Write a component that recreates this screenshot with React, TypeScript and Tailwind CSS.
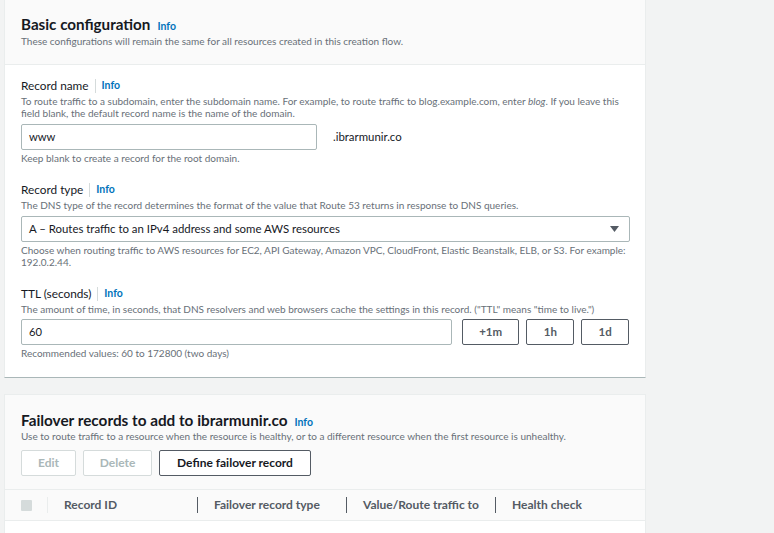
import React from "react";

const font = { fontFamily: "Lato, 'Noto Sans', sans-serif" };

function Info() {
  return <span className="text-[10.5px] font-bold text-[#0073bb]">Info</span>;
}

function FieldLabel({ children }: { children: React.ReactNode }) {
  return (
    <div className="flex h-[16px] items-center text-[11.8px] text-[#16191f]">
      <span>{children}</span>
      <span className="mx-[6px] h-[14px] w-px bg-[#d5dbdb]" />
      <Info />
    </div>
  );
}

function Hint({ children, className = "" }: { children: React.ReactNode; className?: string }) {
  return <p className={`text-[10px] leading-[12px] text-[#687078] ${className}`}>{children}</p>;
}

function TimeButton({ label, width }: { label: string; width: string }) {
  return (
    <button className={`h-[26px] ${width} rounded-[2px] border border-[#545b64] bg-white text-[11.5px] font-bold text-[#545b64]`}>
      {label}
    </button>
  );
}

export default function App() {
  return (
    <div style={font} className="h-[533px] w-[774px] overflow-hidden bg-[#f2f3f3] pl-[4px]">
      <section className="w-[642px] border-x border-b border-[#eaeded] border-b-[#aab7b8] bg-white">
        <div className="h-[65px] border-b border-[#eaeded] bg-[#fafafa] px-[16px] pt-[13px]">
          <div className="flex h-[20px] items-baseline gap-[7px] pt-[1px]">
            <h2 className="text-[15.2px] font-bold leading-[20px] text-[#16191f]">Basic configuration</h2>
            <Info />
          </div>
          <Hint className="mt-[2px]">
            These configurations will remain the same for all resources created in this creation flow.
          </Hint>
        </div>

        <div className="px-[16px] pb-[18px] pt-[13px]">
          <FieldLabel>Record name</FieldLabel>
          <Hint className="mt-[1px]">
            To route traffic to a subdomain, enter the subdomain name. For example, to route traffic to blog.example.com, enter <i>blog</i>. If you leave this field blank, the default record name is the name of the domain.
          </Hint>
          <div className="mt-[5px] flex items-center">
            <div className="flex h-[26px] w-[296px] items-center rounded-[2px] border border-[#aab7b8] px-[7px] text-[11.2px] text-[#16191f]">
              www
            </div>
            <span className="ml-[16px] text-[11.4px] text-[#16191f]">.ibrarmunir.co</span>
          </div>
          <Hint className="mt-[2px]">Keep blank to create a record for the root domain.</Hint>

          <div className="mt-[18px]">
            <FieldLabel>Record type</FieldLabel>
          </div>
          <Hint className="mt-[1px]">
            The DNS type of the record determines the format of the value that Route 53 returns in response to DNS queries.
          </Hint>
          <div className="mt-[5px] flex h-[26px] w-[609px] items-center justify-between rounded-[2px] border border-[#aab7b8] pl-[7px] pr-[10px] text-[11.4px] text-[#16191f]">
            <span>A – Routes traffic to an IPv4 address and some AWS resources</span>
            <svg width="9" height="6" viewBox="0 0 9 6">
              <path d="M0 0h9L4.5 6z" fill="#545b64" />
            </svg>
          </div>
          <Hint className="mt-[2px]">
            Choose when routing traffic to AWS resources for EC2, API Gateway, Amazon VPC, CloudFront, Elastic Beanstalk, ELB, or S3. For example: 192.0.2.44.
          </Hint>

          <div className="mt-[18px]">
            <FieldLabel>TTL (seconds)</FieldLabel>
          </div>
          <Hint className="mt-[1px]">
            The amount of time, in seconds, that DNS resolvers and web browsers cache the settings in this record. ("TTL" means "time to live.")
          </Hint>
          <div className="mt-[4px] flex items-center gap-[7px]">
            <div className="mr-[3px] flex h-[26px] w-[433px] items-center rounded-[2px] border border-[#aab7b8] px-[7px] text-[11.2px] text-[#16191f]">
              60
            </div>
            <TimeButton label="+1m" width="w-[58px]" />
            <TimeButton label="1h" width="w-[48px]" />
            <TimeButton label="1d" width="w-[48px]" />
          </div>
          <Hint className="mt-[2px]">Recommended values: 60 to 172800 (two days)</Hint>
        </div>
      </section>

      <section className="mt-[16px] w-[642px] border-x border-t border-[#eaeded] bg-[#fafafa]">
        <div className="px-[16px] pt-[14px]">
          <div className="flex h-[20px] items-baseline gap-[7px] pt-[1px]">
            <h2 className="text-[15.3px] font-bold leading-[20px] text-[#16191f]">Failover records to add to ibrarmunir.co</h2>
            <Info />
          </div>
          <Hint className="mt-[1px]">
            Use to route traffic to a resource when the resource is healthy, or to a different resource when the first resource is unhealthy.
          </Hint>
          <div className="mt-[8px] flex gap-[7px] pb-[13px]">
            <button className="h-[26px] w-[55px] rounded-[2px] border border-[#d5dbdb] bg-white text-[12px] font-bold text-[#aab7b8]">
              Edit
            </button>
            <button className="h-[26px] w-[69px] rounded-[2px] border border-[#d5dbdb] bg-white text-[12px] font-bold text-[#aab7b8]">
              Delete
            </button>
            <button className="h-[26px] w-[152px] rounded-[2px] border border-[#545b64] bg-white text-[12px] font-bold text-[#16191f]">
              Define failover record
            </button>
          </div>
        </div>
        <div className="flex h-[32px] items-center border-y border-[#eaeded] text-[12px] font-bold text-[#545b64]">
          <div className="ml-[16px] h-[11px] w-[11px] rounded-[1px] bg-[#d5dbdb]" />
          <div className="ml-[15px] h-[16px] w-px bg-[#eaeded]" />
          <div className="w-[149px] pl-[16px]">Record ID</div>
          <div className="h-[16px] w-px bg-[#545b64]" />
          <div className="w-[148px] pl-[16px]">Failover record type</div>
          <div className="h-[16px] w-px bg-[#545b64]" />
          <div className="w-[148px] pl-[16px]">Value/Route traffic to</div>
          <div className="h-[16px] w-px bg-[#545b64]" />
          <div className="pl-[16px]">Health check</div>
        </div>
        <div className="h-[20px] bg-white" />
      </section>
    </div>
  );
}
